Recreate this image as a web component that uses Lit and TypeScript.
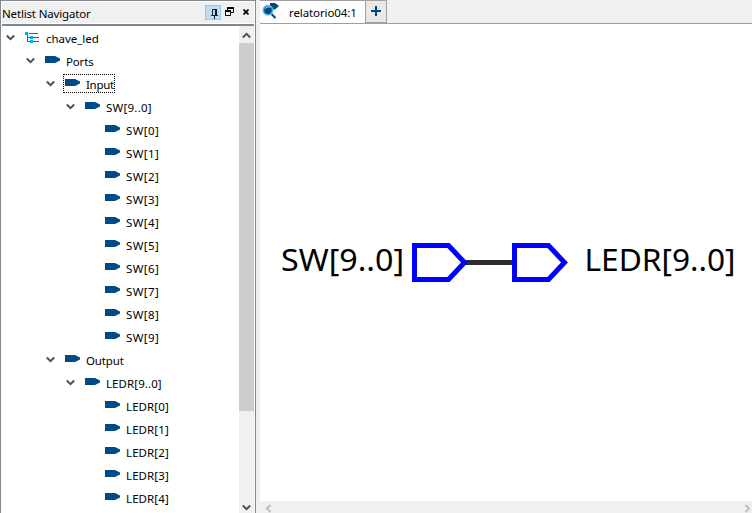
import { LitElement, html, css, svg } from "lit";
import { customElement } from "lit/decorators.js";
import { classMap } from "lit/directives/class-map.js";

interface TreeRow {
  label: string;
  level: number;
  spacing?: number;
  open?: boolean;
  root?: boolean;
  focused?: boolean;
}

const pins = (name: string, count: number, spacing: number): TreeRow[] =>
  Array.from({ length: count }, (_, i) => ({ label: `${name}[${i}]`, level: 4, spacing }));

const ROWS: TreeRow[] = [
  { label: "chave_led", level: 0, open: true, root: true, spacing: -0.03 },
  { label: "Ports", level: 1, open: true },
  { label: "Input", level: 2, open: true, focused: true, spacing: -0.3 },
  { label: "SW[9..0]", level: 3, open: true, spacing: 0.25 },
  ...pins("SW", 10, 0.42),
  { label: "Output", level: 2, open: true },
  { label: "LEDR[9..0]", level: 3, open: true, spacing: 0.08 },
  ...pins("LEDR", 5, 0.1),
];

const chevron = (d: string) => html`<svg class="chev" width="9" height="9" viewBox="0 0 9 9">
  ${svg`<path d=${d} fill="none" stroke="currentColor" stroke-width="2"/>`}
</svg>`;
const DOWN = "M.8 2.5L4.5 6.2L8.2 2.5";
const UP = "M.8 6.5L4.5 2.8L8.2 6.5";
const LEFT = "M6.5 1L3 4.5L6.5 8";
const RIGHT = "M2.5 1L6 4.5L2.5 8";

@customElement("netlist-tree")
export class NetlistTree extends LitElement {
  static styles = css`
    :host { display: block; flex: 1; min-width: 0; overflow: hidden; background: #fff; }
    .row { display: flex; height: 23px; align-items: flex-start; padding-left: 5px; }
    .gap { flex: none; }
    .twist { width: 9px; height: 9px; margin-top: 7px; flex: none; color: #505050; }
    .chev { display: block; }
    .item { display: flex; height: 17px; margin: 2px 0 0 8px; padding: 0 0 0 1px; border: 1px solid transparent; }
    .item.focused { border: 1px dotted #000; }
    .icon { display: block; width: 16px; height: 16px; flex: none; }
    .label { font: 11.5px/20px "Noto Sans", "Open Sans", sans-serif; margin: 0 0 0 5px; white-space: pre; }
  `;
  render() {
    return ROWS.map(
      (r) => html`<div class="row">
        <span class="gap" style="width:${r.level * 20}px"></span>
        <span class="twist">${r.open ? chevron(DOWN) : ""}</span>
        <span class=${classMap({ item: true, focused: !!r.focused })}>
          ${r.root
            ? html`<svg class="icon" viewBox="0 0 16 16">
                <path d="M2.5 4V12.5H6M2.5 8.5H6M4 4.5H13M8 8.5H14M8 12.5H14" fill="none" stroke="#2a6a9c" />
                <path d="M0 3H3V6H0ZM5 7H8V10H5ZM5 11H8V14H5Z" fill="#00aeef" />
              </svg>`
            : html`<svg class="icon" viewBox="0 0 16 16">
                <path d="M0 4H10L15 6.5V8.5L10 11H0Z" fill="#004a86" />
              </svg>`}
          <span class="label" style="letter-spacing:${r.spacing ?? -0.15}px">${r.label}</span>
        </span>
      </div>`
    );
  }
}

@customElement("app-root")
export class AppRoot extends LitElement {
  static styles = css`
    :host { display: flex; width: 752px; height: 513px; overflow: hidden; background: #f0f0f0; color: #000;
      font-family: "Noto Sans", "Open Sans", sans-serif; }
    * { box-sizing: border-box; }
    .chev { display: block; }
    .nav { display: flex; flex-direction: column; width: 256px; border: solid #828790; border-width: 1px 1px 0 1px; }
    .title { display: flex; align-items: center; height: 25px; border: 1px solid #fff; border-bottom: 0;
      box-shadow: inset 0 -2px #828790, inset 0 -3px #fff; font-size: 11.5px; letter-spacing: -0.16px; }
    .title .name { flex: 1; height: 24px; line-height: 24px; }
    .pin { display: block; width: 16px; height: 15px; background: #c0dcf3; border: 1px solid #90c8f6; margin-top: -4px; }
    .float { display: block; margin: -5px 0 0 4px; }
    .close { display: block; margin: -4px 5px 0 9px; }
    .body { display: flex; flex: 1; min-height: 0; }
    .vbar { display: flex; flex-direction: column; align-items: center; width: 16px; background: #f0f0f0; border-right: 1px solid #fff;
      color: #505050; justify-content: space-between; padding: 5px 0 1px; }
    .thumb { width: 15px; height: 368px; background: #cdcdcd; margin: 3px 0 auto; }
    .work { display: flex; flex-direction: column; flex: 1; margin-left: 4px; min-width: 0; }
    .tabs { display: flex; height: 24px; border-bottom: 1px solid #a0a0a0; }
    .tab { display: flex; width: 106px; background: #fff; border: solid #a0a0a0; border-width: 1px 1px 0 0; }
    .tabicon { display: block; margin-left: 2px; }
    .tab span { font-size: 11.5px; line-height: 23px; margin-left: 9px; letter-spacing: -0.1px; white-space: nowrap; }
    .add { display: flex; width: 21px; height: 23px; border: solid #a0a0a0; border-width: 1px 1px 1px 0; background: #e8e8e8; }
    .canvas { flex: 1; background: #fff; }
    .canvas svg { display: block; }
    .net { font: 30.5px "Noto Sans", "Open Sans", sans-serif; }
    .hbar { display: flex; justify-content: space-between; height: 12px; padding: 3px 0 0 4px; color: #bfbfbf; }
  `;
  render() {
    return html`
      <div class="nav">
        <div class="title">
          <span class="name">Netlist Navigator</span>
          <svg class="pin" viewBox="0 0 14 13">
            <path d="M6.5 9V3.5H10M5 9.5H12M8.5 10V13" fill="none" stroke="#222" />
            <path d="M9 3H11V9H9Z" fill="#111" />
          </svg>
          <svg class="float" width="9" height="9" viewBox="0 0 9 9">
            <path d="M2.5 3V1H8.5V5.5H6M.5 4H5.5V8.5H.5Z" fill="none" stroke="#000" />
            <path d="M2 0H9V2H2ZM0 3H6V5H0Z" />
          </svg>
          <svg class="close" width="6" height="6" viewBox="0 0 6 6">
            <path d="M.5 .5L5.5 5.5M5.5 .5L.5 5.5" fill="none" stroke="#000" stroke-width="1.7" />
          </svg>
        </div>
        <div class="body">
          <netlist-tree></netlist-tree>
          <div class="vbar">${chevron(UP)}<div class="thumb"></div>${chevron(DOWN)}</div>
        </div>
      </div>
      <div class="work">
        <div class="tabs">
          <div class="tab">
            <svg class="tabicon" width="18" height="20" viewBox="0 0 18 20">
              <path d="M8 2H13L17 5L13 8.5H8Z" fill="#00467f" />
              <path d="M9.5 13L13.5 17" stroke="#00467f" stroke-width="2" />
              <circle cx="6" cy="9.2" r="4.6" fill="#00467f" stroke="#4db8e8" stroke-width="1.7" />
              <path d="M3.5 7.8L5 6H8.5" stroke="#9ad8f4" fill="none" />
            </svg>
            <span>relatorio04:1</span>
          </div>
          <div class="add">
            <svg width="20" height="21" viewBox="0 0 20 21">
              <path d="M5 10H15M10 5V15" stroke="#00467f" stroke-width="2" />
            </svg>
          </div>
        </div>
        <div class="canvas">
          <svg width="492" height="477" viewBox="260 24 492 477">
            <path d="M465 262.5H514" stroke="#2d2d2d" stroke-width="5" />
            <path d="M414.5 245.5H448.5L464.5 262.5L448.5 279.5H414.5Z" fill="#fff" stroke="#00f" stroke-width="5" />
            <path d="M514.5 245.5H548.5L564.5 262.5L548.5 279.5H514.5Z" fill="#fff" stroke="#00f" stroke-width="5" />
            <text class="net" x="281" y="271" textLength="123" lengthAdjust="spacingAndGlyphs">SW[9..0]</text>
            <text class="net" x="584.5" y="271" textLength="151" lengthAdjust="spacingAndGlyphs">LEDR[9..0]</text>
          </svg>
        </div>
        <div class="hbar">${chevron(LEFT)}${chevron(RIGHT)}</div>
      </div>
    `;
  }
}
